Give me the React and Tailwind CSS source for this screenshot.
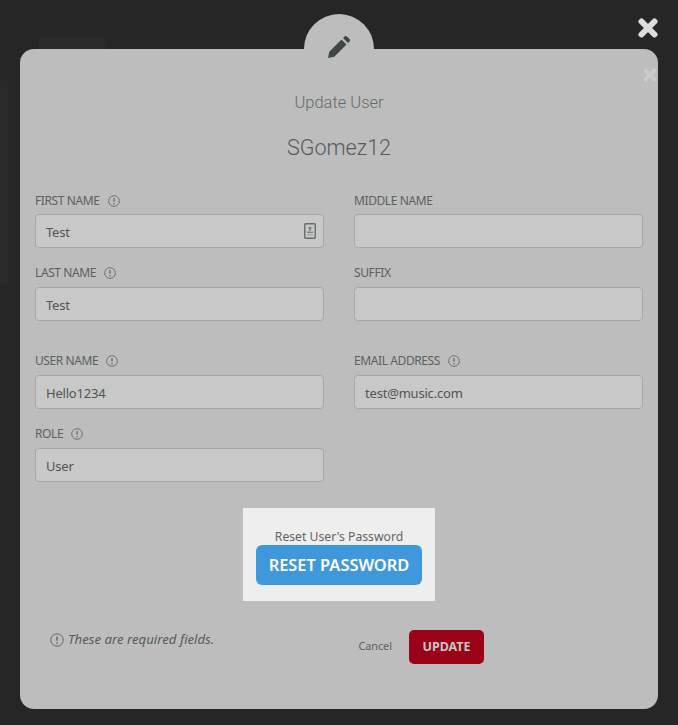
import { useState } from 'react';

function InfoIcon({ size = 12 }) {
  return (
    <svg width={size} height={size} viewBox="0 0 14 14" fill="none" className="shrink-0">
      <circle cx="7" cy="7" r="6.2" stroke="#5f6666" strokeWidth="1" />
      <path d="M7 3.4v4.4" stroke="#5f6666" strokeWidth="1.4" />
      <path d="M7 9.2v1.5" stroke="#5f6666" strokeWidth="1.4" />
    </svg>
  );
}

function Field({ label, info, value, contact, tight, className = '' }) {
  return (
    <div className={`flex flex-col ${className}`}>
      <div className="flex items-center h-[14px] gap-[8px] text-[12px] leading-[14px] tracking-[-0.4px] text-[#5a6161]">
        <span>{label}</span>
        {info && <InfoIcon />}
      </div>
      <div className={`relative h-[34px] rounded-[4px] border border-[#a6a6a6] bg-[#c8c8c8] px-[10px] pt-[3px] flex items-center text-[13px] tracking-[-0.2px] text-[#4f5555] ${tight ? 'mt-[6px]' : 'mt-[7px]'}`}>
        <span>{value}</span>
        {contact && (
          <svg width="12" height="16" viewBox="0 0 12 16" className="absolute right-[7px] top-[8px]">
            <rect x="0.75" y="0.75" width="10.5" height="14.5" rx="1" fill="#c8c8c8" stroke="#666c6c" strokeWidth="1.4" />
            <circle cx="6" cy="5" r="1.5" fill="#7a7f7f" />
            <path d="M5.2 5.5h1.6v2.5H5.2z" fill="#7a7f7f" />
            <path d="M3 8.6h6v1.4H3z" fill="#7a7f7f" />
            <path d="M3 11.2h6v1.2H3z" fill="#9c9f9f" />
          </svg>
        )}
      </div>
    </div>
  );
}

export default function App() {
  const [user] = useState({ first: 'Test', last: 'Test', userName: 'Hello1234', email: 'test@music.com', role: 'User' });

  return (
    <div className="relative h-[725px] w-[678px] overflow-hidden bg-[#262626] pt-[49px] px-[20px] font-['Noto_Sans',sans-serif]">
      {/* faint page behind the overlay */}
      <div className="absolute left-[39px] top-[37px] h-[12px] w-[67px] rounded-t-[4px] bg-[#2b2b2b]" />
      <div className="absolute left-0 top-[80px] h-[204px] w-[8px] rounded-r-[3px] bg-[#2a2a2a]" />

      {/* close */}
      <svg width="22" height="22" viewBox="0 0 22 22" className="absolute left-[637px] top-[17px]">
        <path d="M4.500 4.500l13 13M17.500 4.500l-13 13" stroke="#dcdcdc" strokeWidth="6" strokeLinecap="round" />
      </svg>

      {/* modal */}
      <div className="relative h-[660px] w-[638px] rounded-[14px] bg-[#bdbdbd] px-[15px]">
        <svg width="14" height="14" viewBox="0 0 14 14" className="absolute right-[1px] top-[19px]">
          <path d="M2.500 2.500l9 9M11.500 2.500l-9 9" stroke="#cccccc" strokeWidth="3.600" strokeLinecap="round" />
        </svg>

        <h2 className="pt-[42px] text-center text-[16.500px] leading-[24px] font-light font-['Roboto',sans-serif] text-[#666c6c]">Update User</h2>
        <h1 className="mt-[18px] text-center text-[21.500px] leading-[30px] font-light font-['Roboto',sans-serif] text-[#565c5c]">SGomez12</h1>

        <div className="mt-[31px] grid grid-cols-[289px_289px] gap-x-[30px]">
          <Field label="FIRST NAME" info value={user.first} contact tight />
          <Field label="MIDDLE NAME" tight />
          <Field label="LAST NAME" info value={user.last} className="mt-[18px]" />
          <Field label="SUFFIX" className="mt-[18px]" />
          <Field label="USER NAME" info value={user.userName} className="mt-[33px]" />
          <Field label="EMAIL ADDRESS" info value={user.email} className="mt-[33px]" />
          <Field label="ROLE" info value={user.role} className="mt-[18px]" />
        </div>

        <div className="mx-auto mt-[26px] flex h-[93px] w-[192px] flex-col items-center bg-[#eeeeee] pt-[20px]">
          <p className="text-[12.200px] leading-[17px] text-[#5f6565]">Reset User's Password</p>
          <button className="h-[40px] w-[166px] rounded-[6px] bg-[#3f98db] text-[16.400px] font-semibold text-white">RESET PASSWORD</button>
        </div>

        <div className="mt-[29px] flex items-center pl-[15px]">
          <div className="flex items-center gap-[4px] text-[13.200px] italic text-[#565c5c] mb-[14px]">
            <InfoIcon size={14} />
            <span>These are required fields.</span>
          </div>
          <button className="ml-auto mb-[2px] text-[10.800px] text-[#5a6060]">Cancel</button>
          <button className="ml-[17px] mr-[159px] h-[34px] w-[75px] rounded-[5px] bg-[#9a0218] text-[12.500px] font-bold text-[#c7c7c7]">UPDATE</button>
        </div>
      </div>

      {/* pencil badge */}
      <div className="absolute left-[304px] top-[14px] h-[70px] w-[70px] rounded-full bg-[#bdbdbd] flex items-center justify-center pb-[4px]">
        <svg width="24" height="24" viewBox="0 0 24 24">
          <path d="M1 23l1.300-6.300L14.500 4.500l5 5L7.300 21.700z" fill="#3f4646" />
          <path d="M16 3l1.500-1.500c.7-.7 1.700-.7 2.400 0l2.600 2.600c.7.700.7 1.700 0 2.400L21 8z" fill="#3f4646" />
        </svg>
      </div>
    </div>
  );
}
